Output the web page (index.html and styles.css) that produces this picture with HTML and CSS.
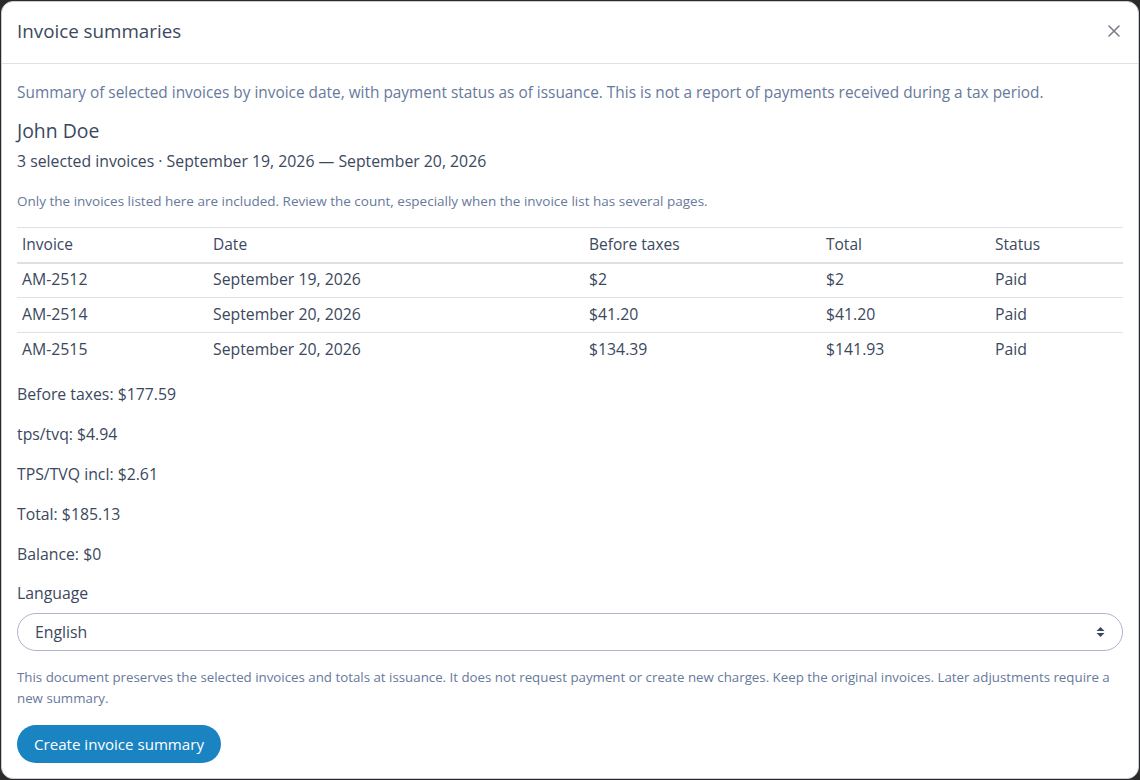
FILE: index.html
```html
<!DOCTYPE html>
<html lang="en">
<head>
<meta charset="utf-8">
<title>Invoice summaries</title>
<link rel="stylesheet" href="styles.css">
</head>
<body>
<div class="modal">
  <div class="modal-header">
    <h1 class="modal-title">Invoice summaries</h1>
    <button class="close" aria-label="Close">
      <svg width="12" height="12" viewBox="0 0 12 12"><path d="M1 1L11 11M11 1L1 11" stroke="#7a7f87" stroke-width="1.6" stroke-linecap="round"/></svg>
    </button>
  </div>
  <div class="modal-body">
    <p class="intro">Summary of selected invoices by invoice date, with payment status as of issuance. This is not a report of payments received during a tax period.</p>
    <h2 class="client">John Doe</h2>
    <p class="range">3 selected invoices · September 19, 2026 — September 20, 2026</p>
    <p class="note">Only the invoices listed here are included. Review the count, especially when the invoice list has several pages.</p>
    <table class="invoices">
      <thead>
        <tr>
          <th class="c-inv">Invoice</th>
          <th class="c-date">Date</th>
          <th class="c-before">Before taxes</th>
          <th class="c-total">Total</th>
          <th class="c-status">Status</th>
        </tr>
      </thead>
      <tbody>
        <tr><td>AM-2512</td><td>September 19, 2026</td><td>$2</td><td>$2</td><td>Paid</td></tr>
        <tr><td>AM-2514</td><td>September 20, 2026</td><td>$41.20</td><td>$41.20</td><td>Paid</td></tr>
        <tr><td>AM-2515</td><td>September 20, 2026</td><td>$134.39</td><td>$141.93</td><td>Paid</td></tr>
      </tbody>
    </table>
    <div class="totals">
      <p>Before taxes: $177.59</p>
      <p>tps/tvq: $4.94</p>
      <p>TPS/TVQ incl: $2.61</p>
      <p>Total: $185.13</p>
      <p>Balance: $0</p>
    </div>
    <label class="lang-label" for="lang">Language</label>
    <div class="select" id="lang">
      <span class="select-value">English</span>
      <svg class="select-arrow" width="9" height="12" viewBox="0 0 9 12"><path d="M4.5 1L8.5 5H0.5Z M4.5 11L0.5 7H8.5Z" fill="#3b4760"/></svg>
    </div>
    <p class="footnote">This document preserves the selected invoices and totals at issuance. It does not request payment or create new charges. Keep the original invoices. Later adjustments require a new summary.</p>
    <button class="btn-primary">Create invoice summary</button>
  </div>
</div>
</body>
</html>
```
FILE: styles.css
```css
* { box-sizing: border-box; }
html, body { margin: 0; padding: 0; }
body {
  background: #2a2a2a;
  font-family: "Open Sans", "Noto Sans", sans-serif;
  color: #3b485e;
  width: 1140px;
  height: 780px;
  padding: 1px;
}
.modal {
  background: #fff;
  height: 778px;
  border-radius: 12px;
  border: 1px solid #c9cdd3;
  overflow: hidden;
}
.modal-header {
  height: 62px;
  border-bottom: 1px solid #dee2e6;
  display: flex;
  align-items: center;
  justify-content: space-between;
  padding: 0 16px 4px 15px;
}
.modal-title {
  margin: 0;
  font-size: 18.8px;
  font-weight: 400;
  color: #3b485e;
}
.close {
  background: none;
  border: 0;
  padding: 0;
  width: 16px;
  height: 16px;
  display: flex;
  align-items: center;
  justify-content: center;
}
.modal-body {
  padding: 17px 15px 0 15px;
}
p { margin: 0; }
.intro {
  font-size: 15.4px;
  line-height: 24px;
  color: #67799c;
  margin-bottom: 13px;
}
.client {
  margin: 0 0 6px;
  font-size: 19.4px;
  font-weight: 400;
  line-height: 26px;
  color: #3b485e;
}
.range {
  font-size: 15.8px;
  line-height: 22px;
  margin-bottom: 19px;
}
.note {
  font-size: 13.5px;
  line-height: 20px;
  color: #67799c;
  margin-bottom: 16px;
}
.invoices {
  width: 100%;
  border-collapse: collapse;
  font-size: 15.8px;
  margin-bottom: 15px;
}
.invoices th, .invoices td {
  text-align: left;
  font-weight: 400;
  padding: 0 5px;
  height: 35px;
  vertical-align: middle;
}
.invoices th { font-size: 15.5px; padding-bottom: 2px; }
.invoices thead tr { border-top: 1px solid #dee2e6; border-bottom: 2px solid #dde1e6; }
.invoices tbody tr { border-bottom: 1px solid #dee2e6; }
.invoices tbody tr:last-child { border-bottom: 0; }
.invoices td { padding-bottom: 2px; }
.c-inv { width: 191px; }
.c-date { width: 376px; }
.c-before { width: 237px; }
.c-total { width: 169px; }
.totals p {
  font-size: 15.8px;
  line-height: 22px;
  margin-bottom: 18px;
}
.lang-label {
  display: block;
  font-size: 15.8px;
  line-height: 22px;
  margin-top: -1px;
  margin-bottom: 9px;
}
.select {
  height: 38px;
  border: 1px solid #adb5cc;
  border-radius: 19px;
  display: flex;
  align-items: center;
  justify-content: space-between;
  padding: 0 17px 0 17px;
  font-size: 15.8px;
  margin-bottom: 16px;
}
.footnote {
  font-size: 13.3px;
  line-height: 21px;
  color: #67799c;
  margin-bottom: 16px;
}
.btn-primary {
  background: #1a83c2;
  color: #fff;
  border: 0;
  border-radius: 19px;
  height: 38px;
  padding: 0 17px;
  font-family: inherit;
  font-size: 15.1px;
}
```
